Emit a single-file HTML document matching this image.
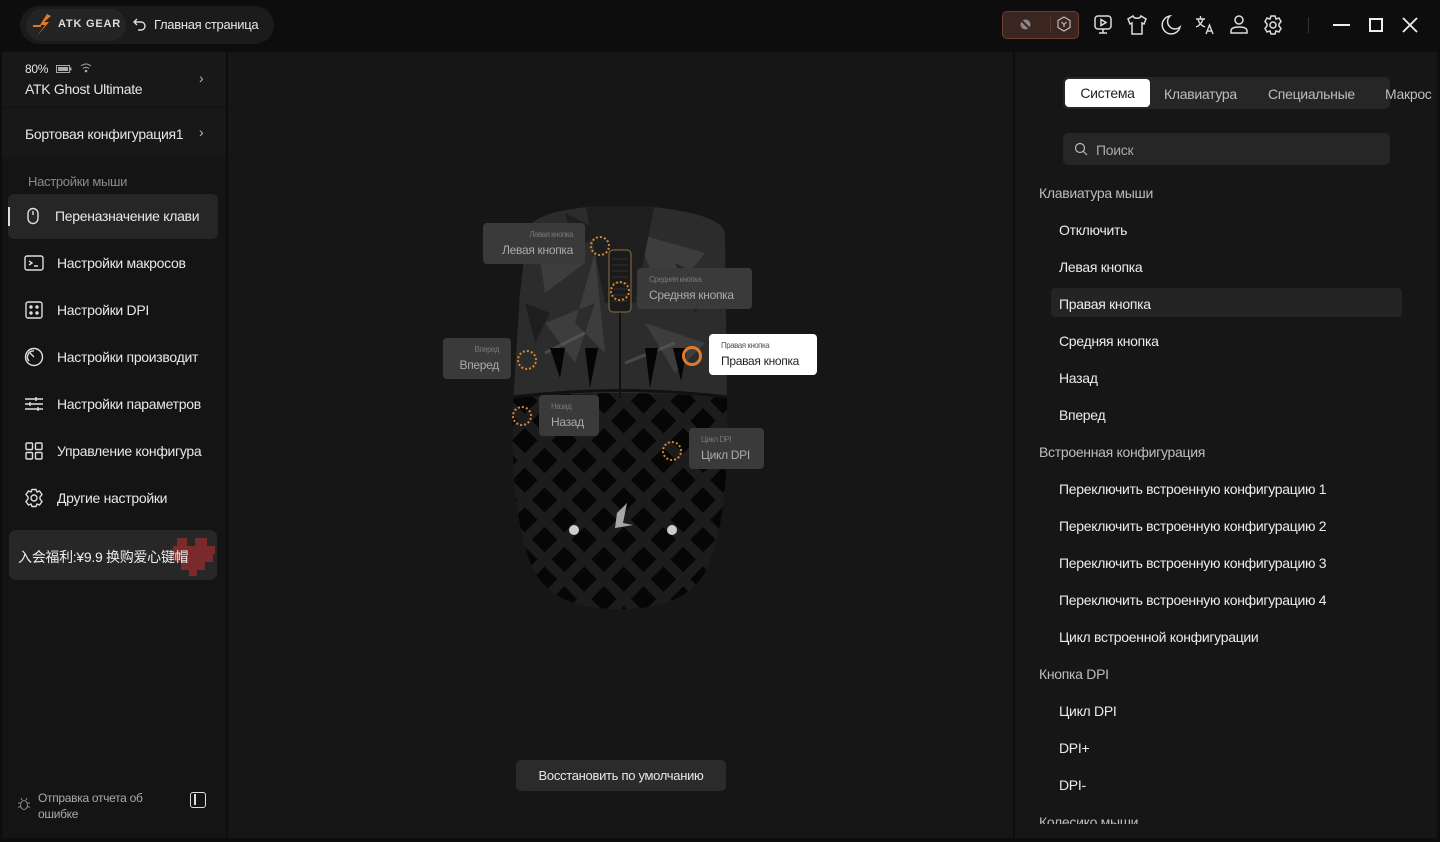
<!DOCTYPE html>
<html><head><meta charset="utf-8"><style>
*{margin:0;padding:0;box-sizing:border-box}
body{width:1440px;height:842px;background:#0d0d0d;font-family:"Liberation Sans","Noto Sans CJK SC",sans-serif;color:#e6e6e6;overflow:hidden;position:relative;font-size:14px;letter-spacing:-0.3px}
.abs{position:absolute}
.panel{background:#171717;position:absolute}
.nav{position:absolute;left:8px;width:210px;height:44px;display:flex;align-items:center;padding-left:16px;font-size:14px;color:#e8e8e8;white-space:nowrap;overflow:hidden}
.nav svg{margin-right:13px;flex:none}
.tip{position:absolute;background:#3a3a3a;border-radius:4px;padding:7px 12px;color:#aaa;text-align:right}
.tip .s{font-size:8px;color:#777;letter-spacing:-0.5px}
.tip .b{font-size:12px;margin-top:4px}
.dot{position:absolute;width:20px;height:20px;border-radius:50%;border:2px dotted #d4852f}
.it{position:absolute;left:1059px;font-size:14px;color:#ececec}
.hd{position:absolute;left:1039px;font-size:14px;color:#bdbdbd}
.ic{position:absolute;top:14px}
</style></head><body>
<div class="abs" style="left:20px;top:6px;width:254px;height:38px;border-radius:19px;background:#1b1b1b"></div>
<div class="abs" style="left:26px;top:9px;width:100px;height:32px;border-radius:16px;background:#242424"></div>
<svg class="abs" style="left:31px;top:13px" width="24" height="24" viewBox="0 0 24 24"><path d="M16 1 L9 12 L14 12 L6 23 L18 9 L13 9 L20 3 Z" fill="#e07a2a"/><path d="M2 13 L10 13" stroke="#e07a2a" stroke-width="2"/></svg>
<div class="abs" style="left:58px;top:18px;font-size:11px;font-weight:bold;letter-spacing:0.8px;color:#ddd">ATK GEAR</div>
<svg class="abs" style="left:133px;top:18px" width="13" height="13" viewBox="0 0 13 13" fill="none" stroke="#ddd" stroke-width="1.4"><path d="M4 1 L1 4 L4 7"/><path d="M1 4 H8 a4 4 0 0 1 0 8 H5"/></svg>
<div class="abs" style="left:154px;top:17px;font-size:13px;color:#e6e6e6">Главная страница</div>

<div class="abs" style="left:1002px;top:11px;width:77px;height:28px;border-radius:5px;background:#3a2520;border:1px solid #6a4030"></div>
<svg class="abs" style="left:1019px;top:18px" width="13" height="13" viewBox="0 0 13 13"><circle cx="6.5" cy="6.5" r="5" fill="#888"/><path d="M3 3 L10 10" stroke="#3a2520" stroke-width="2"/></svg>
<div class="abs" style="left:1050px;top:17px;width:1px;height:16px;background:#5a3a30"></div>
<svg class="abs" style="left:1056px;top:16px" width="16" height="16" viewBox="0 0 16 16" fill="none" stroke="#bbb" stroke-width="1.2"><path d="M8 1 L14 4.5 V11.5 L8 15 L2 11.5 V4.5 Z"/><path d="M5.5 6 L8 8.5 L10.5 6 M8 8.5 V11"/></svg>
<svg class="ic" style="left:1093px" width="20" height="22" viewBox="0 0 20 22" fill="none" stroke="#ddd" stroke-width="1.5"><rect x="2" y="2" width="16" height="13" rx="3"/><path d="M8 5.5 L13 8.5 L8 11.5 Z"/><path d="M10 15 V19 M6 19 H14"/></svg>
<svg class="ic" style="left:1126px" width="22" height="22" viewBox="0 0 22 22" fill="none" stroke="#ddd" stroke-width="1.5"><path d="M7 2 L2 5 L4 10 L6 9 V20 H16 V9 L18 10 L20 5 L15 2 C14 5 8 5 7 2 Z"/></svg>
<svg class="ic" style="left:1160px" width="22" height="22" viewBox="0 0 22 22" fill="none" stroke="#ddd" stroke-width="1.5"><path d="M10 2 A9 9 0 1 0 20 13 A7 7 0 0 1 10 2 Z"/></svg>
<svg class="ic" style="left:1194px" width="22" height="22" viewBox="0 0 22 22" fill="none" stroke="#ddd" stroke-width="1.4"><path d="M2 5 H11 M6.5 2 V5 M4 5 C5 10 8 12 11 13 M9 5 C8 9 5 12 2 13"/><path d="M12 20 L15.5 11 L19 20 M13.2 17 H17.8"/></svg>
<svg class="ic" style="left:1228px" width="22" height="22" viewBox="0 0 22 22" fill="none" stroke="#ddd" stroke-width="1.5"><circle cx="11" cy="6" r="4"/><path d="M3 19 V17 C3 14 6 13 11 13 C16 13 19 14 19 17 V19 Z"/></svg>
<svg class="ic" style="left:1262px" width="22" height="22" viewBox="0 0 22 22" fill="none" stroke="#ddd" stroke-width="1.5"><path d="M9 2 H13 L14 5 L17 4 L19 7.5 L17 10 V12 L19 14.5 L17 18 L14 17 L13 20 H9 L8 17 L5 18 L3 14.5 L5 12 V10 L3 7.5 L5 4 L8 5 Z"/><circle cx="11" cy="11" r="3"/></svg>
<div class="abs" style="left:1308px;top:17px;width:1px;height:16px;background:#333"></div>
<div class="abs" style="left:1333px;top:24px;width:17px;height:1.5px;background:#eee"></div>
<div class="abs" style="left:1369px;top:18px;width:14px;height:14px;border:2px solid #eee"></div>
<svg class="abs" style="left:1402px;top:17px" width="16" height="16" viewBox="0 0 16 16" stroke="#eee" stroke-width="1.8"><path d="M1 1 L15 15 M15 1 L1 15"/></svg>

<div class="panel" style="left:2px;top:52px;width:224px;height:786px;background:#141414"></div>
<div class="panel" style="left:2px;top:52px;width:224px;height:54px;background:#181818"></div>
<div class="panel" style="left:2px;top:109px;width:224px;height:48px;background:#181818"></div>
<div class="abs" style="left:25px;top:62px;font-size:12px">80%</div>
<svg class="abs" style="left:56px;top:65px" width="16" height="8" viewBox="0 0 16 8"><rect x="0.5" y="0.5" width="13" height="7" fill="none" stroke="#aaa"/><rect x="2" y="2" width="10" height="4" fill="#aaa"/><rect x="14" y="2.5" width="1.5" height="3" fill="#aaa"/></svg>
<svg class="abs" style="left:80px;top:63px" width="12" height="10" viewBox="0 0 12 10" fill="none" stroke="#aaa"><path d="M1 3 Q6 -1 11 3 M3 5.5 Q6 3 9 5.5"/><circle cx="6" cy="8" r="0.8" fill="#aaa"/></svg>
<div class="abs" style="left:25px;top:81px;font-size:14px">ATK Ghost Ultimate</div>
<div class="abs" style="left:199px;top:70px;color:#bbb;font-size:14px">›</div>
<div class="abs" style="left:25px;top:126px;font-size:14px">Бортовая конфигурация1</div>
<div class="abs" style="left:199px;top:124px;color:#bbb;font-size:14px">›</div>
<div class="abs" style="left:28px;top:174px;font-size:13px;color:#8a8a8a">Настройки мыши</div>
<div class="abs" style="left:8px;top:194px;width:210px;height:45px;border-radius:6px;background:#262626"></div>
<div class="abs" style="left:8px;top:207px;width:2px;height:19px;background:#ddd"></div>
<div class="nav" style="top:194px"><svg width="18" height="18" viewBox="0 0 18 18" fill="none" stroke="#ddd" stroke-width="1.4"><rect x="4" y="1.5" width="10" height="15" rx="5"/><path d="M9 4 V8"/></svg>Переназначение клави</div>
<div class="nav" style="top:241px"><svg width="20" height="18" viewBox="0 0 20 18" fill="none" stroke="#ddd" stroke-width="1.4"><rect x="1" y="2" width="18" height="14" rx="2"/><path d="M5 7 L8 9 L5 11 M10 12 H14"/></svg>Настройки макросов</div>
<div class="nav" style="top:288px"><svg width="20" height="18" viewBox="0 0 20 18" fill="none" stroke="#ddd" stroke-width="1.4"><rect x="2" y="1" width="16" height="16" rx="2"/><circle cx="7" cy="6" r="1" fill="#ddd"/><circle cx="13" cy="12" r="1" fill="#ddd"/><circle cx="7" cy="12" r="1" fill="#ddd"/><circle cx="13" cy="6" r="1" fill="#ddd"/></svg>Настройки DPI</div>
<div class="nav" style="top:335px"><svg width="20" height="20" viewBox="0 0 20 20" fill="none" stroke="#ddd" stroke-width="1.4"><circle cx="10" cy="10" r="8.5"/><path d="M10 10 L6 6 M5 14 A6 6 0 0 1 10 4"/></svg>Настройки производит</div>
<div class="nav" style="top:382px"><svg width="20" height="18" viewBox="0 0 20 18" fill="none" stroke="#ddd" stroke-width="1.4"><path d="M1 4 H19 M1 9 H19 M1 14 H19 M12 2 V6 M6 7 V11 M14 12 V16"/></svg>Настройки параметров</div>
<div class="nav" style="top:429px"><svg width="20" height="20" viewBox="0 0 20 20" fill="none" stroke="#ddd" stroke-width="1.4"><rect x="2" y="2" width="6.5" height="6.5" rx="1"/><rect x="11.5" y="2" width="6.5" height="6.5" rx="1"/><rect x="2" y="11.5" width="6.5" height="6.5" rx="1"/><rect x="11.5" y="11.5" width="6.5" height="6.5" rx="1"/></svg>Управление конфигура</div>
<div class="nav" style="top:476px"><svg width="20" height="20" viewBox="0 0 20 20" fill="none" stroke="#ddd" stroke-width="1.4"><path d="M8 1.5 H12 L13 4 L15.5 3 L18 6.5 L16 9 V11 L18 13.5 L15.5 17 L13 16 L12 18.5 H8 L7 16 L4.5 17 L2 13.5 L4 11 V9 L2 6.5 L4.5 3 L7 4 Z"/><circle cx="10" cy="10" r="3"/></svg>Другие настройки</div>
<div class="abs" style="left:9px;top:530px;width:208px;height:50px;border-radius:7px;background:#272727;overflow:hidden">
<svg class="abs" style="left:160px;top:6px" width="48" height="40" viewBox="0 0 48 40"><g fill="#7a2a2a"><rect x="8" y="2" width="10" height="8"/><rect x="26" y="2" width="12" height="8"/><rect x="4" y="10" width="42" height="8"/><rect x="4" y="18" width="40" height="8"/><rect x="12" y="26" width="24" height="8"/><rect x="20" y="34" width="8" height="6"/></g></svg>
</div>
<div class="abs" style="left:18px;top:547px;font-size:14px;color:#eee">入会福利:¥9.9 换购爱心键帽</div>
<svg class="abs" style="left:17px;top:797px" width="14" height="14" viewBox="0 0 14 14" fill="none" stroke="#888" stroke-width="1"><ellipse cx="7" cy="8" rx="3.5" ry="4.5"/><path d="M1 6 H3.5 M10.5 6 H13 M1 10 H3.5 M10.5 10 H13 M5 3 L4 1 M9 3 L10 1"/></svg>
<div class="abs" style="left:38px;top:790px;font-size:12px;line-height:16px;color:#aaa">Отправка отчета об<br>ошибке</div>
<div class="abs" style="left:190px;top:792px;width:16px;height:16px;border:1.5px solid #ddd;border-radius:3px"><div style="position:absolute;left:3px;top:1px;width:1.5px;height:11px;background:#ddd"></div></div>

<div class="panel" style="left:228px;top:52px;width:785px;height:786px;background:#161616"></div>
<svg class="abs" style="left:505px;top:203px" width="230" height="408" viewBox="0 0 230 408">
<defs><pattern id="net" width="28" height="28" patternUnits="userSpaceOnUse" patternTransform="rotate(45)"><rect width="28" height="28" fill="#1c1c1c"/><rect x="5" y="5" width="18" height="18" fill="#060606"/></pattern>
<clipPath id="body"><path d="M22 30 C22 15 50 6 95 3 L135 3 C180 6 218 15 220 30 L222 200 C224 260 220 330 200 370 C180 400 150 406 115 406 C80 406 50 400 30 370 C10 330 6 260 8 200 L15 90 Z"/></clipPath></defs>
<g clip-path="url(#body)">
<rect width="230" height="408" fill="url(#net)"/>
<path d="M0 0 H230 V195 Q115 185 0 195 Z" fill="#2c2c2c"/>
<path d="M30 20 L80 60 L40 90 Z M130 30 L200 50 L160 100 Z M40 120 L90 100 L70 160 Z M140 120 L200 140 L170 170 Z M90 50 L70 120 L100 150 Z" fill="#4a4a4a" opacity=".6"/>
<path d="M60 10 L100 30 L70 45 Z M170 60 L210 80 L190 110 Z M20 100 L45 110 L30 140 Z" fill="#151515" opacity=".6"/>
<path d="M20 60 L60 40 M150 70 L190 90 M40 150 L80 130 M120 160 L170 140" stroke="#666" stroke-width="3" opacity=".5"/>
<path d="M45 145 L60 145 L55 175 Z M80 145 L93 145 L85 185 Z M140 145 L153 145 L145 185 Z M168 145 L182 145 L176 178 Z" fill="#050505"/>
<path d="M0 195 Q115 180 230 195" stroke="#111" stroke-width="3" fill="none"/>
<path d="M115 100 V195" stroke="#111" stroke-width="2"/>
<path d="M80 0 L115 0 L118 100 L100 100 Z M115 0 L150 0 L130 100 L118 100 Z" fill="#1e1e1e"/>
</g>
<rect x="104" y="47" width="22" height="62" rx="4" fill="#1a1a1a" stroke="#8a7440" stroke-width="1"/>
<path d="M107 56 H123 M107 62 H123 M107 68 H123 M107 74 H123 M107 80 H123 M107 86 H123 M107 92 H123 M107 98 H123" stroke="#333"/>
<circle cx="69" cy="327" r="5" fill="#ccc"/><circle cx="167" cy="327" r="5" fill="#ccc"/>
<path d="M112 310 L122 300 L118 320 L128 322 L110 325 Z" fill="#ccc" opacity=".8"/>
</svg>
<div class="dot" style="left:590px;top:236px"></div>
<div class="dot" style="left:610px;top:281px"></div>
<div class="dot" style="left:517px;top:350px"></div>
<div class="dot" style="left:512px;top:406px"></div>
<div class="dot" style="left:662px;top:441px"></div>
<div class="abs" style="left:682px;top:346px;width:20px;height:20px;border-radius:50%;border:3px solid #e07a2a"></div>
<div class="tip" style="left:483px;top:223px;width:102px"><div class="s">Левая кнопка</div><div class="b">Левая кнопка</div></div>
<div class="tip" style="left:637px;top:268px;width:115px;text-align:left"><div class="s">Средняя кнопка</div><div class="b">Средняя кнопка</div></div>
<div class="tip" style="left:443px;top:338px;width:68px"><div class="s">Вперед</div><div class="b">Вперед</div></div>
<div class="tip" style="left:539px;top:395px;width:60px;text-align:left"><div class="s">Назад</div><div class="b">Назад</div></div>
<div class="tip" style="left:689px;top:428px;width:75px;text-align:left"><div class="s">Цикл DPI</div><div class="b">Цикл DPI</div></div>
<div class="tip" style="left:709px;top:334px;width:108px;background:#fff;color:#222;text-align:left"><div class="s" style="color:#555">Правая кнопка</div><div class="b">Правая кнопка</div></div>
<div class="abs" style="left:516px;top:760px;width:210px;height:31px;border-radius:5px;background:#2b2b2b;text-align:center;line-height:31px;font-size:13px;color:#e8e8e8">Восстановить по умолчанию</div>

<div class="panel" style="left:1015px;top:52px;width:422px;height:786px;background:#161616;overflow:hidden">
<div class="abs" style="left:48px;top:25px;width:327px;height:32px;border-radius:5px;background:#262626"></div>
<div class="abs" style="left:50px;top:27px;width:85px;height:28px;border-radius:4px;background:#fff;color:#222;text-align:center;line-height:28px;font-size:14px">Система</div>
<div class="abs" style="left:149px;top:34px;color:#bdbdbd;font-size:14px">Клавиатура</div>
<div class="abs" style="left:253px;top:34px;color:#bdbdbd;font-size:14px">Специальные</div>
<div class="abs" style="left:370px;top:34px;color:#bdbdbd;font-size:14px;white-space:nowrap">Макрос</div>
<div class="abs" style="left:48px;top:81px;width:327px;height:32px;border-radius:5px;background:#262626"></div>
<svg class="abs" style="left:59px;top:90px" width="14" height="14" viewBox="0 0 14 14" fill="none" stroke="#bbb" stroke-width="1.2"><circle cx="6" cy="6" r="4.5"/><path d="M9.5 9.5 L13 13"/></svg>
<div class="abs" style="left:81px;top:90px;color:#aaa;font-size:14px">Поиск</div>
<div class="abs" style="left:36px;top:236px;width:351px;height:29px;border-radius:4px;background:#242424"></div>
</div>
<div class="hd" style="top:185px">Клавиатура мыши</div>
<div class="it" style="top:222px">Отключить</div>
<div class="it" style="top:259px">Левая кнопка</div>
<div class="it" style="top:296px">Правая кнопка</div>
<div class="it" style="top:333px">Средняя кнопка</div>
<div class="it" style="top:370px">Назад</div>
<div class="it" style="top:407px">Вперед</div>
<div class="hd" style="top:444px">Встроенная конфигурация</div>
<div class="it" style="top:481px">Переключить встроенную конфигурацию 1</div>
<div class="it" style="top:518px">Переключить встроенную конфигурацию 2</div>
<div class="it" style="top:555px">Переключить встроенную конфигурацию 3</div>
<div class="it" style="top:592px">Переключить встроенную конфигурацию 4</div>
<div class="it" style="top:629px">Цикл встроенной конфигурации</div>
<div class="hd" style="top:666px">Кнопка DPI</div>
<div class="it" style="top:703px">Цикл DPI</div>
<div class="it" style="top:740px">DPI+</div>
<div class="it" style="top:777px">DPI-</div>
<div class="abs" style="left:1039px;top:814px;height:10px;overflow:hidden;color:#bdbdbd;font-size:14px">Колесико мыши</div>
</body></html>
